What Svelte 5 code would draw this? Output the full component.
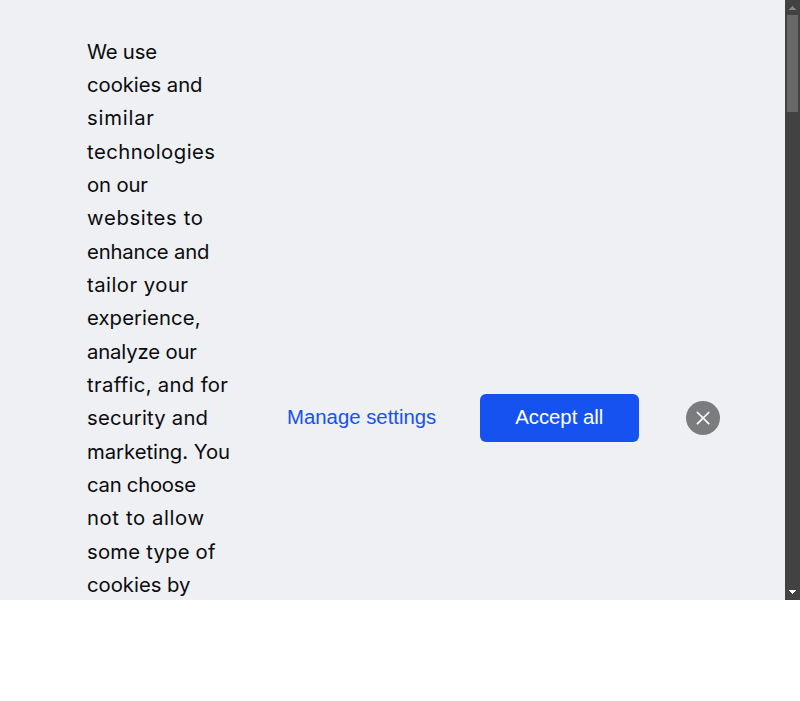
<script>
  // Each line of the notice with its set width in pixels.
  const lines = [
    ['We use', 70], ['cookies and', 115.5], ['similar', 67], ['technologies', 128],
    ['on our', 61], ['websites to', 116], ['enhance and', 122.5], ['tailor your', 101],
    ['experience,', 113.5], ['analyze our', 110], ['traffic, and for', 141],
    ['security and', 121], ['marketing. You', 143], ['can choose', 109],
    ['not to allow', 117], ['some type of', 128.5], ['cookies by', 103.5]
  ];

  // Spreads the letters of a line over its set width.
  function fit(node, width) {
    const natural = node.getBoundingClientRect().width;
    node.style.letterSpacing = `${(width - natural) / (node.textContent.length - 1)}px`;
  }
</script>

<div class="page">
  <div class="banner">
    <section class="content">
      <p class="notice">
        {#each lines as [text, width]}
          <span class="line"><span class="fit" use:fit={width}>{text}</span></span>
        {/each}
      </p>
      <div class="actions">
        <button class="manage">Manage settings</button>
        <button class="accept">Accept all</button>
        <button class="close" aria-label="Close">
          <svg width="34" height="34" viewBox="0 0 34 34"><path d="M11 11l12.2 12.2M23.2 11L11 23.2" fill="none" stroke="#fff" stroke-width="1.7" /></svg>
        </button>
      </div>
    </section>
    <div class="scrollbar">
      <svg class="arrow" width="15" height="15" viewBox="0 0 15 15"><path d="M7 6h1v1h1v1h1v1h1v1H4V9h1V8h1V7h1z" fill="#858585" shape-rendering="crispEdges" /></svg>
      <div class="thumb"></div>
      <svg class="arrow" width="15" height="15" viewBox="0 0 15 15"><path d="M4 5h7v1h-1v1h-1v1h-1v1h-1v-1h-1v-1h-1v-1h-1z" fill="#fff" shape-rendering="crispEdges" /></svg>
    </div>
  </div>
</div>

<style>
  :global(body) { margin: 0; background: #fff; overflow: hidden; }
  .page { height: 701px; background: #fff; }
  .banner { display: flex; height: 600px; background: #eef0f4; overflow: hidden; }
  .content { display: flex; flex: 1; padding: 34px 65px 0 87px; min-width: 0; }
  .notice { width: 144px; margin: 0; padding-top: 0.5px; flex: none; color: #0a0b0d; font: 400 20.3px/33.34px Inter, sans-serif; }
  .line { display: block; white-space: nowrap; }
  .fit { display: inline-block; }
  .actions { display: flex; align-items: center; height: 48px; margin-top: 360px; flex: none; }
  button { margin: 0; padding: 0 0 2px; border: 0; box-sizing: border-box; font: 20.35px/24px "Liberation Sans", Arial, sans-serif; white-space: nowrap; }
  .manage { width: 149px; margin: 0 44px 0 56px; background: none; color: #1652f0; }
  .accept { width: 159px; height: 48px; padding-right: 0.5px; border-radius: 6px; background: #1652f0; color: #fff; }
  .close { width: 34px; height: 34px; margin-left: 47px; padding: 0; border-radius: 50%; background: #7b7c7e; }
  .close svg { display: block; }
  .scrollbar { display: flex; flex-direction: column; width: 15px; background: #424242; }
  .arrow { display: block; flex: none; }
  .thumb { height: 97px; margin: 0 2px auto; background: #686868; }
</style>
